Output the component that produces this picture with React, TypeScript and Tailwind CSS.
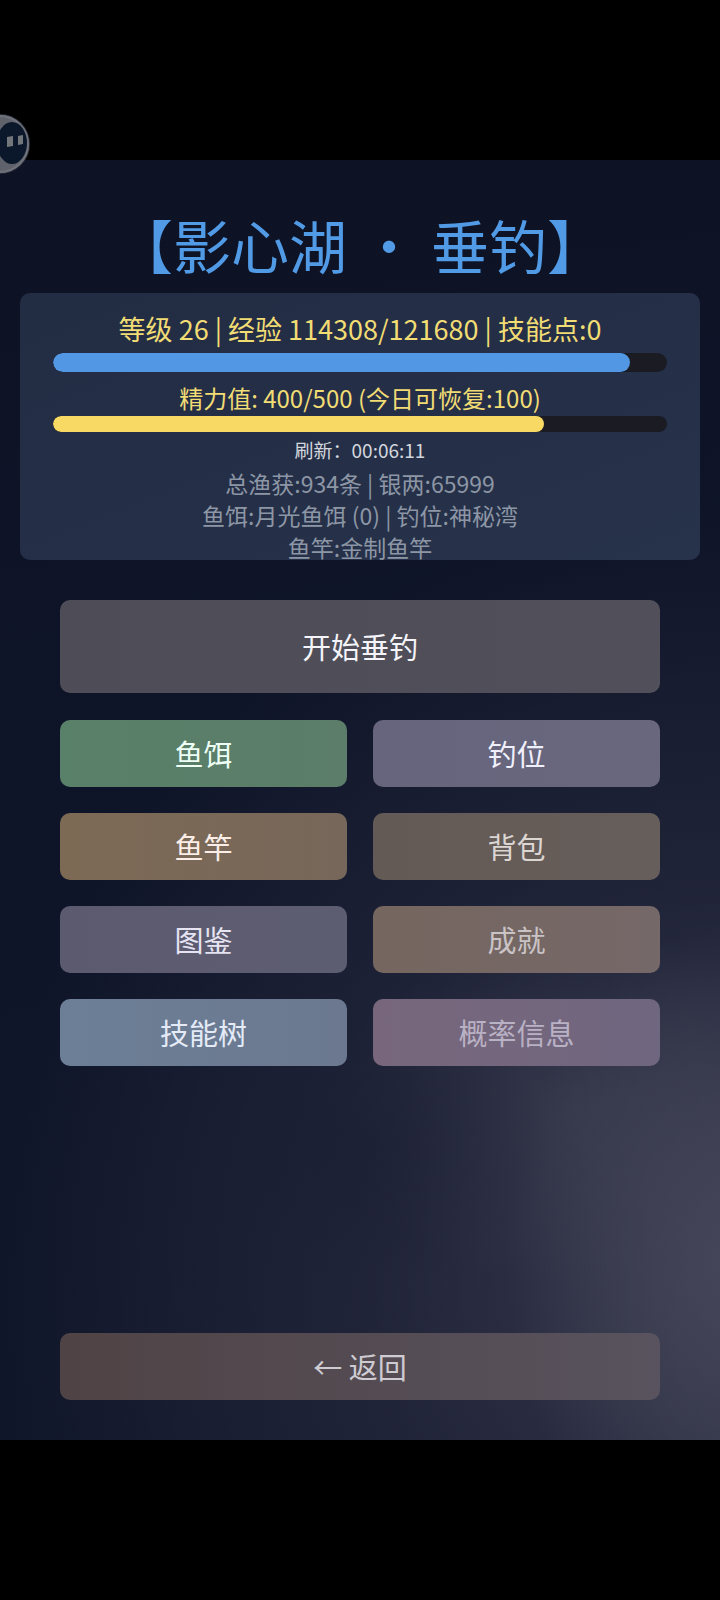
import { useState } from 'react';

interface MenuItem {
  id: string;
  label: string;
  style: string;
}

const player = {
  level: 26,
  exp: 114308,
  expMax: 121680,
  skillPoints: 0,
  energy: 400,
  energyMax: 500,
  recoverable: 100,
  refresh: '00:06:11',
  caught: 934,
  silver: 65999,
  bait: '月光鱼饵',
  baitCount: 0,
  spot: '神秘湾',
  rod: '金制鱼竿',
};

const menu: MenuItem[] = [
  { id: 'bait', label: '鱼饵', style: 'from-[#598069] to-[#5b7d69] text-[#eefff6]' },
  { id: 'spot', label: '钓位', style: 'from-[#66657d] to-[#68677e] text-[#f0f0fc]' },
  { id: 'rod', label: '鱼竿', style: 'from-[#7d6a55] to-[#77675a] text-[#fbeee8]' },
  { id: 'bag', label: '背包', style: 'from-[#645a55] to-[#665e5b] text-[#dcd6d3]' },
  { id: 'codex', label: '图鉴', style: 'from-[#5c5a6f] to-[#5d5d72] text-[#e6e4f2]' },
  { id: 'achievement', label: '成就', style: 'from-[#75665f] to-[#756868] text-[#c9c3c5]' },
  { id: 'skills', label: '技能树', style: 'from-[#6c7f96] to-[#6b7890] text-[#e4ebf7]' },
  { id: 'odds', label: '概率信息', style: 'from-[#78677c] to-[#6f667f] text-[#b9b1c4]' },
];

function Bar({ label, value, max, size, color }: { label: string; value: number; max: number; size: string; color: string }) {
  return (
    <div
      role="progressbar"
      aria-label={label}
      aria-valuenow={value}
      aria-valuemax={max}
      className={`w-full shrink-0 overflow-hidden rounded-full bg-[#1b1b24] ${size}`}
    >
      <div className={`h-full rounded-full ${color}`} style={{ width: `${(value / max) * 100}%` }} />
    </div>
  );
}

// Half-hidden assistant ball docked on the left edge of the screen
function FloatingBall() {
  return (
    <button aria-label="悬浮球" className="absolute top-[113px] left-0">
      <svg width="31" height="62" viewBox="0 0 31 62">
        <circle cx="0" cy="31" r="30" fill="#2b2f3c" />
        <circle cx="0" cy="31" r="29" fill="#5f626b" />
        <path d="M0 3A28 28 0 0 1 0 59" fill="none" stroke="#6f727b" strokeWidth="2" />
        <ellipse cx="12" cy="30" rx="15" ry="21" fill="#0b182b" />
        <path d="M7 24l6-1v10l-6 1z" fill="#73777c" />
        <path d="M18 23l5-1v9l-5 1z" fill="#73777c" />
      </svg>
    </button>
  );
}

export default function App() {
  const [active, setActive] = useState('');

  return (
    <div className="relative flex min-h-screen flex-col bg-black py-40 font-['Noto_Sans_CJK_SC',sans-serif]">
      <main className="flex flex-1 flex-col bg-[radial-gradient(ellipse_190px_140px_at_50%_77%,#1a1e3190,#1a1e3100),radial-gradient(ellipse_240px_180px_at_80%_74%,#43455770,#43455700),radial-gradient(ellipse_240px_340px_at_104%_86%,#454659,#45465900),radial-gradient(ellipse_720px_760px_at_100%_86%,#383a4e,#2b2d4299_50%,#1a1e3100),linear-gradient(170deg,#0d1224,#0f1529_50%,#11172b)] px-5 pb-10">
        <h1 className="pt-10 pb-1 text-center text-[58px] leading-[89px] text-[#519ae6]">【影心湖 ・ 垂钓】</h1>

        {/* Player status */}
        <section className="flex h-[267px] flex-col items-center rounded-[10px] bg-linear-to-br from-[#222d44] to-[#27324b] px-[33px] pt-[14px] text-center">
          <p className="pb-[2px] text-[27px] leading-[44px] text-[#f2dc74]">
            等级 {player.level} | 经验 {player.exp}/{player.expMax} | 技能点:{player.skillPoints}
          </p>
          <Bar label="经验" value={player.exp} max={player.expMax} size="h-[19px]" color="bg-[#5197e3]" />
          <p className="pt-2 text-[24px] leading-[36px] text-[#f2dc74]">
            精力值: {player.energy}/{player.energyMax} (今日可恢复:{player.recoverable})
          </p>
          <Bar label="精力值" value={player.energy} max={player.energyMax} size="h-4" color="bg-[#f7d963]" />
          <p className="text-[19px] leading-[35px] text-[#d3d6dd]">刷新：{player.refresh}</p>
          <div className="text-[23px] leading-[32px] text-[#8d96a5]">
            <p>总渔获:{player.caught}条 | 银两:{player.silver}</p>
            <p>鱼饵:{player.bait} ({player.baitCount}) | 钓位:{player.spot}</p>
            <p>鱼竿:{player.rod}</p>
          </div>
        </section>

        {/* Actions */}
        <div className="flex flex-1 flex-col px-10 pt-10 text-[29px]">
          <button
            onClick={() => setActive('fish')}
            className="h-[93px] rounded-[10px] bg-linear-to-r from-[#4e4d57] to-[#51505a] text-[#f4f4fa]"
          >
            开始垂钓
          </button>

          <nav className="grid grid-cols-2 gap-[26px] pt-[27px]">
            {menu.map(item => (
              <button
                key={item.id}
                aria-pressed={active === item.id}
                onClick={() => setActive(item.id)}
                className={`h-[67px] rounded-[10px] bg-linear-to-r ${item.style}`}
              >
                {item.label}
              </button>
            ))}
          </nav>

          <button
            onClick={() => setActive('')}
            className="mt-auto h-[67px] rounded-[10px] bg-linear-to-r from-[#4f4345] via-[#544b52] to-[#58535e] text-[#cfcbd2]"
          >
            ← 返回
          </button>
        </div>
      </main>
      <FloatingBall />
    </div>
  );
}
